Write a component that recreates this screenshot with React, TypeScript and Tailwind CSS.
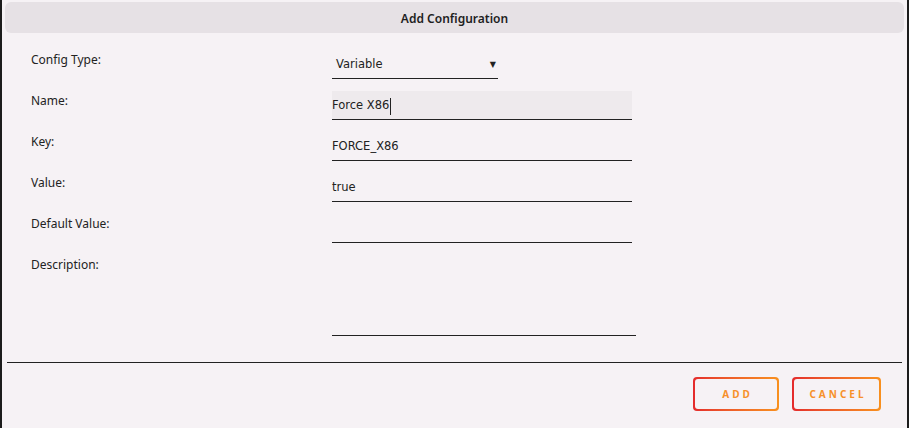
const fields = [
  { label: "Name:", value: "Force X86", focused: true },
  { label: "Key:", value: "FORCE_X86" },
  { label: "Value:", value: "true" },
  { label: "Default Value:", value: "" },
];

const GradientButton = ({ text, width }: { text: string; width: string }) => {
  return (
    <button
      className={`${width} h-[34px] rounded-[4px] bg-linear-to-r from-[#e42a2c] to-[#f8901e] p-[2px]`}
    >
      <span className="flex h-full w-full items-center justify-center rounded-[3px] bg-[#f6f2f5] pl-[3px] font-['Noto_Sans',sans-serif] text-[10px] font-bold tracking-[3px] text-[#f7902a]">
        {text}
      </span>
    </button>
  );
};

const Label = ({ text }: { text: string }) => (
  <div className="w-[301px] pt-[2px] font-['Noto_Sans',sans-serif] text-[12px] leading-[16px]">
    {text}
  </div>
);

const App = () => {
  return (
    <div className="flex h-[428px] w-[909px] flex-col border-x-2 border-[#1c1c1c] bg-[#f6f2f5] px-[3px] pt-[2px] font-['DejaVu_Sans',sans-serif] text-[#222]">
      <div className="flex h-[31px] items-center justify-center rounded-md bg-[#e6e1e5] pt-[2px] font-['Noto_Sans',sans-serif] text-[12px] font-semibold text-[#1e1e1e]">
        Add Configuration
      </div>

      <div className="flex flex-col gap-[12px] pl-[26px] pt-[17px] text-[11.5px]">
        <div className="flex">
          <Label text="Config Type:" />
          <div className="flex h-[29px] w-[166px] items-center justify-between border-b border-[#222] pl-[4px] pr-[2px] pt-[2px]">
            <span>Variable</span>
            <span className="text-[8px]">▼</span>
          </div>
        </div>

        {fields.map((f) => (
          <div key={f.label} className="flex">
            <Label text={f.label} />
            <div
              className={`flex h-[29px] w-[300px] items-center border-b border-[#222] pt-[2px] ${
                f.focused ? "bg-[#eeeaed]" : ""
              }`}
            >
              <span>{f.value}</span>
              {f.focused && <span className="ml-[1px] h-[17px] w-px bg-[#222]" />}
            </div>
          </div>
        ))}

        <div className="flex">
          <Label text="Description:" />
          <div className="h-[81px] w-[304px] border-b border-[#222]" />
        </div>
      </div>

      <div className="mx-[2px] mt-[26px] border-t border-[#222]" />

      <div className="flex justify-end gap-[13px] pr-[23px] pt-[14px]">
        <GradientButton text="ADD" width="w-[86px]" />
        <GradientButton text="CANCEL" width="w-[89px]" />
      </div>
    </div>
  );
};

export default App;
